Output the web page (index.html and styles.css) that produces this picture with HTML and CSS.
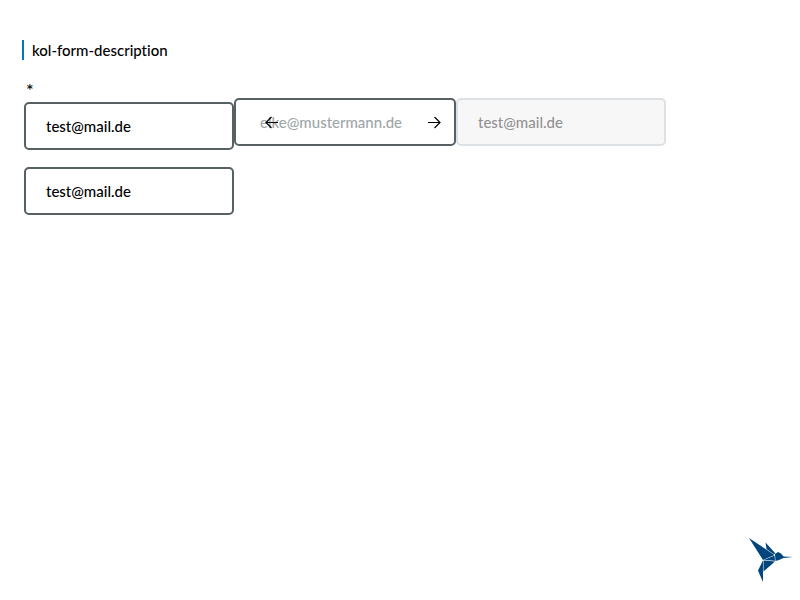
FILE: index.html
```html
<!DOCTYPE html>
<html lang="de">
<head>
<meta charset="utf-8">
<meta name="viewport" content="width=device-width, initial-scale=1">
<title>kol-form-description</title>
<link rel="stylesheet" href="styles.css">
</head>
<body>
<main>
  <p class="description">kol-form-description</p>
  <form class="fields">
    <div class="field required">
      <label for="mail-required">*</label>
      <input class="input" id="mail-required" type="email" value="test@mail.de" required>
    </div>
    <div class="field raised with-icons">
      <input class="input" type="email" placeholder="elke@mustermann.de">
      <svg class="icon icon-left" viewBox="0 0 14 14" aria-hidden="true"><path d="M13 7.500H1.500M6.500 2 1 7.500l5.500 5.500"/></svg>
      <svg class="icon icon-right" viewBox="0 0 14 14" aria-hidden="true"><path d="M1 7.500h11.500M7.500 2 13 7.500l-5.500 5.500"/></svg>
    </div>
    <div class="field raised">
      <input class="input" type="email" value="test@mail.de" disabled>
    </div>
    <div class="field">
      <input class="input" type="email" value="test@mail.de" readonly>
    </div>
  </form>
</main>
<svg class="logo" viewBox="0 0 44 44" aria-hidden="true">
  <path d="M0 0 25.500 17 14 22z"/>
  <path d="M16.500 4.500 26.500 15.500 24.500 16 17.500 11z"/>
  <path d="M26 16 29 14 32 15.500 34.500 18.500 44 19 34.500 20 30 22 26.500 23z"/>
  <path d="M25.500 17.500 26 22.800 15 22z"/>
  <path d="M14.500 22.500 26 23.500 14.500 33.500z"/>
  <path d="M14 22.500 14 33.500 14 44 9 32.500z"/>
</svg>
</body>
</html>
```
FILE: styles.css
```css
* {
  box-sizing: border-box;
}

body {
  margin: 0;
  padding: 40px 22px;
  background: #fff;
  color: #000;
  font: 500 15px/20px Lato, sans-serif;
  font-variant-ligatures: none;
}

.description {
  margin: 0 0 18px;
  padding-left: 8px;
  border-left: 2px solid #0077b6;
}

.fields {
  display: flex;
  flex-wrap: wrap;
  align-items: flex-end;
  row-gap: 17px;
  padding: 0 2px;
}

.field {
  position: relative;
  width: 210px;
}

.required label {
  display: block;
  height: 24px;
  padding: 2px;
  font-size: 18px;
}

.raised {
  margin-bottom: 4px;
}

.with-icons {
  width: 222px;
}

.input {
  display: block;
  width: 100%;
  height: 48px;
  margin: 0;
  padding: 0 20px;
  border: 2px solid #576164;
  border-radius: 5px;
  background: #fff;
  color: #000;
  font: inherit;
}

.with-icons .input {
  padding: 0 24px;
}

.input::placeholder {
  color: #a0a6a8;
  opacity: 1;
}

.input:disabled {
  border-color: #dde1e4;
  background: #f7f7f7;
  color: #929292;
}

.icon {
  position: absolute;
  top: 17px;
  width: 14px;
  height: 14px;
  fill: none;
  stroke: #000;
  stroke-width: 1.200;
}

.icon-left {
  left: 31px;
}

.icon-right {
  right: 15px;
}

.logo {
  position: fixed;
  right: 7px;
  bottom: 18px;
  width: 44px;
  height: 44px;
  fill: #00457c;
}
```
